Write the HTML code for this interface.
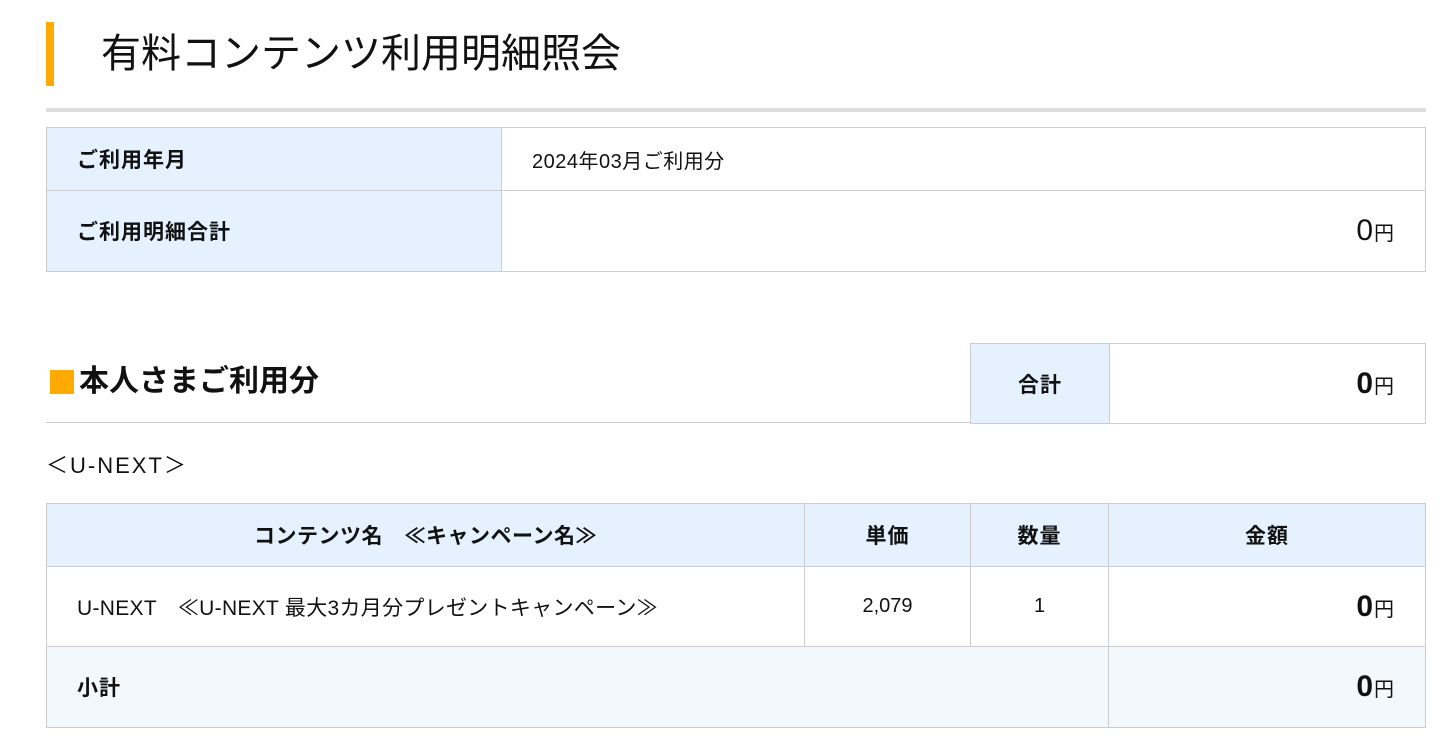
<!DOCTYPE html>
<html lang="ja"><head><meta charset="utf-8">
<style>
*{margin:0;padding:0;box-sizing:border-box}
body{width:1440px;height:749px;background:#fff;position:relative;overflow:hidden;font-family:"Liberation Sans","Noto Sans CJK JP",sans-serif;color:#111}
.a{position:absolute}
.c{position:absolute;border:1px solid #ccc;display:flex;align-items:center;font-size:21px}
.lb{background:#e5f1fe}
.b{font-weight:bold}
.amt{justify-content:flex-end;padding-right:31px}
.amt .n{font-size:30px;line-height:1}
.amt .y{font-size:20px;line-height:1;margin-left:1px;margin-top:6px}
.ctr{justify-content:center}
</style></head><body>
<div class="a" style="left:46px;top:22px;width:8px;height:64px;background:#ffaa00"></div>
<div class="a" style="left:101px;top:26px;font-size:40px;line-height:56px">有料コンテンツ利用明細照会</div>
<div class="a" style="left:46px;top:108px;width:1380px;height:4px;background:#ddd"></div>

<div class="c lb b" style="left:46px;top:127px;width:456px;height:64px;padding-left:30px;letter-spacing:1px">ご利用年月</div>
<div class="c" style="left:501px;top:127px;width:925px;height:64px;padding-left:30px;font-size:20px;letter-spacing:0.5px">2024年03月ご利用分</div>
<div class="c lb b" style="left:46px;top:190px;width:456px;height:82px;padding-left:30px;letter-spacing:1px">ご利用明細合計</div>
<div class="c amt" style="left:501px;top:190px;width:925px;height:82px"><span class="n">0</span><span class="y">円</span></div>

<div class="a" style="left:50px;top:370px;width:24px;height:24px;background:#ffaa00"></div>
<div class="a b" style="left:79px;top:361px;font-size:30px;line-height:42px">本人さまご利用分</div>
<div class="a" style="left:46px;top:422px;width:925px;height:1px;background:#ccc"></div>
<div class="c lb b ctr" style="left:970px;top:343px;width:140px;height:81px;letter-spacing:1px">合計</div>
<div class="c amt b" style="left:1109px;top:343px;width:317px;height:81px"><span class="n">0</span><span class="y" style="font-weight:normal">円</span></div>

<div class="a" style="left:46px;top:452px;font-size:22px;line-height:28px;letter-spacing:2px">＜U-NEXT＞</div>

<div class="c lb b ctr" style="left:46px;top:503px;width:759px;height:64px;letter-spacing:0.5px">コンテンツ名　≪キャンペーン名≫</div>
<div class="c lb b ctr" style="left:804px;top:503px;width:167px;height:64px;letter-spacing:1px">単価</div>
<div class="c lb b ctr" style="left:970px;top:503px;width:139px;height:64px;letter-spacing:1px">数量</div>
<div class="c lb b ctr" style="left:1108px;top:503px;width:318px;height:64px;letter-spacing:1px">金額</div>

<div class="c" style="left:46px;top:566px;width:759px;height:81px;padding-left:30px;letter-spacing:0.3px">U-NEXT　≪U-NEXT 最大3カ月分プレゼントキャンペーン≫</div>
<div class="c ctr" style="left:804px;top:566px;width:167px;height:81px;font-size:20px">2,079</div>
<div class="c ctr" style="left:970px;top:566px;width:139px;height:81px;font-size:20px">1</div>
<div class="c amt b" style="left:1108px;top:566px;width:318px;height:81px"><span class="n">0</span><span class="y" style="font-weight:normal">円</span></div>

<div class="c b" style="left:46px;top:646px;width:1063px;height:82px;padding-left:30px;background:#f3f8fc;letter-spacing:1px">小計</div>
<div class="c amt b" style="left:1108px;top:646px;width:318px;height:82px;background:#f3f8fc"><span class="n">0</span><span class="y" style="font-weight:normal">円</span></div>
</body></html>
